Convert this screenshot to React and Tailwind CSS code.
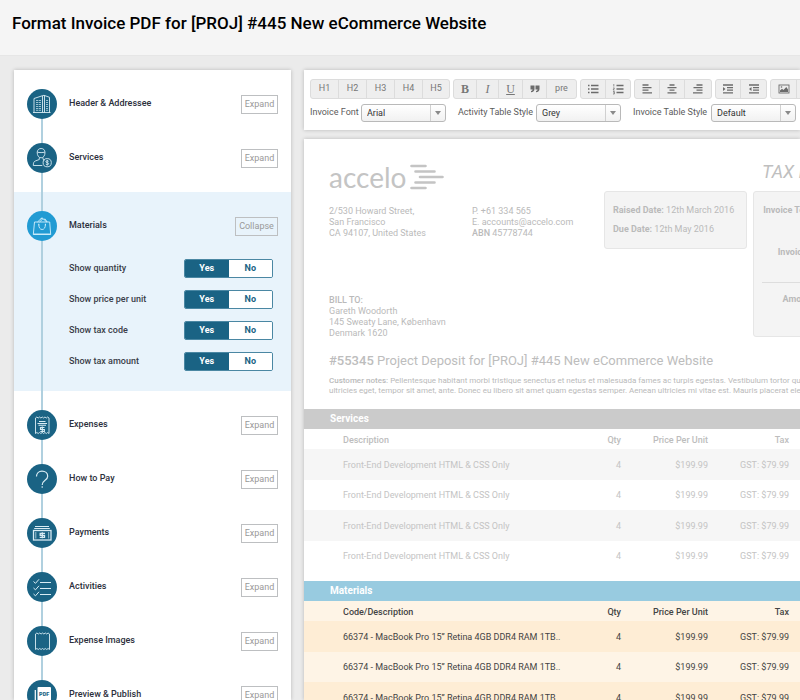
import React, { useState } from "react";

const iconProps = {
  viewBox: "0 0 30 30",
  className: "h-[30px] w-[30px]",
  fill: "none",
  stroke: "#d9ecf4",
  strokeWidth: 0.9,
  "aria-hidden": true,
};

const BuildingIcon = () => (
  <svg {...iconProps}>
    <path d="M6 23.5h17.5M7 23.5V9.5l8.5-2.8v16.8M15.5 6.7l1.5-.4 5.5 2v15.2M17.5 6.5v17" />
    <path d="M9 11.5h5M9 13.5h5M9 15.5h5M9 17.5h5M9 19.5h5M9 21.3h5" strokeDasharray="2.2 .6" strokeWidth="0.7" />
    <path d="M19 11.5h2M19 13.5h2M19 15.5h2M19 17.5h2M19 19.5h2M19 21.3h2" strokeWidth="0.7" />
  </svg>
);

const PersonIcon = () => (
  <svg {...iconProps}>
    <path d="M10.200 9.500c0-2.500 1.600-4 3.900-4s3.900 1.500 3.900 4c0 3-1.500 5.300-3.900 5.300s-3.900-2.300-3.900-5.300zM10.400 9.300c2 .5 5.300.3 7.400 0M12.300 14.500v2l-4 1.500c-1.500.6-2 2-2 4.500h9M16 14.500v1.800l1.500 1" />
    <circle cx="20.200" cy="19.700" r="4.100" />
    <path d="M21.600 18.400c-.3-.5-.8-.7-1.400-.7-.8 0-1.300.4-1.300 1 0 1.400 2.800.6 2.800 2 0 .7-.6 1-1.500 1-.7 0-1.200-.2-1.500-.8M20.200 16.900v5.600" />
  </svg>
);

const BagIcon = () => (
  <svg {...iconProps} stroke="#d3effc">
    <path d="M7.500 11h15.200l1 12.500H6.300zM6.400 23h17.200" />
    <path d="M10.500 11l4-3.800 1.800 1.300M12.500 11l3-2.800M13.500 8l2-.8 4.300 3.800M17 8.300l1.200-.2 2 2.900" />
    <path d="M11.800 13.500c0 3 1.200 5 3.300 5s3.300-2 3.300-5" />
    <path d="M11.300 13.500h1M17.900 13.500h1" strokeWidth="1.400" />
  </svg>
);

const ReceiptIcon = () => (
  <svg {...iconProps}>
    <path d="M8.500 8v15.500M22 8v15.500" />
    <path d="M8.500 8l1.350-1 1.350 1 1.350-1 1.350 1 1.350-1 1.350 1 1.350-1 1.350 1 1.350-1 1.350 1M8.500 23.500l1.350-1 1.350 1 1.350-1 1.350 1 1.350-1 1.350 1 1.350-1 1.350 1 1.350-1 1.350 1" />
    <path d="M12 11.500h6.500M10.500 13.500h9.500M11.500 15.200h7.500" strokeWidth="1.100" />
    <path d="M17.500 17.500h-4v2h3.800v2h-4M15.300 16.500v6" strokeWidth="1.200" />
  </svg>
);

const QuestionIcon = () => (
  <svg {...iconProps} strokeWidth="1.200">
    <path d="M9.500 12.500c0-3.200 2.300-5.300 5.500-5.300s5.700 2 5.700 5c0 4.500-5.500 3.800-5.500 8.800M15.200 22.300v1.500" />
  </svg>
);

const CashIcon = () => (
  <svg {...iconProps}>
    <path d="M8 8.500h14M7.200 10.500h15.600" strokeWidth="1.200" />
    <rect x="6.500" y="12.500" width="17.500" height="9.500" strokeWidth="1.300" />
    <path d="M8.800 14v6.500M21.700 14v6.500" strokeWidth="0.700" />
    <path d="M18 15.400h-4.800v1.900h4.300v2h-4.800M15.300 14.300v6" strokeWidth="1.300" />
  </svg>
);

const ChecklistIcon = () => (
  <svg {...iconProps} strokeWidth="1">
    <path d="M6.500 9.500l2 1.800 3.500-4M6.500 16l2 1.800 3.500-4M6.500 22l2 1.800 3.500-4M13 10.500h11M13 16.500h11M13 22.500h11" />
  </svg>
);

const ImageReceiptIcon = () => (
  <svg {...iconProps}>
    <path d="M8.500 8v15.500M22.500 8v15.500" />
    <path d="M8.500 8l1.400-1 1.400 1 1.400-1 1.400 1 1.400-1 1.400 1 1.400-1 1.400 1 1.400-1 1.400 1M8.500 23.500l1.400-1 1.400 1 1.400-1 1.400 1 1.400-1 1.400 1 1.400-1 1.400 1 1.400-1 1.400 1" />
  </svg>
);

const PdfIcon = () => (
  <svg {...iconProps} stroke="none">
    <rect x="10.500" y="7" width="13.500" height="13.500" rx="1" fill="#fff" />
    <path d="M8.300 10v12.500H21" stroke="#fff" strokeWidth="1.200" />
    <text x="17.200" y="15.500" textAnchor="middle" fontSize="5.500" fontWeight="900" fill="#1a6384" fontFamily="Roboto, sans-serif">PDF</text>
  </svg>
);

const OPTIONS = ["Show quantity", "Show price per unit", "Show tax code", "Show tax amount"];

function Rail({ icon: Icon, active, first, tall }) {
  return (
    <div className="flex w-[30px] shrink-0 flex-col items-center">
      <span className={`w-0.5 ${tall ? "h-[19px]" : "h-3"} ${first ? "bg-transparent" : "bg-[#b0d0df]"}`} />
      <span className={`h-[30px] w-[30px] rounded-full ${active ? "bg-[#219bd3]" : "bg-[#1a6384]"}`}>
        <Icon />
      </span>
      <span className="w-0.5 flex-1 bg-[#b0d0df]" />
    </div>
  );
}

function ItemHead({ label, open }) {
  return (
    <div className="flex h-[54px] items-center justify-between">
      <h2 className="text-[9px] font-medium text-[#2c2f3c]">{label}</h2>
      <button
        type="button"
        aria-expanded={!!open}
        className={`h-[19px] border border-[#bdbfc1] text-center text-[9px] leading-3 text-[#999999] ${open ? "w-[43px]" : "w-[37px]"}`}
      >
        {open ? "Collapse" : "Expand"}
      </button>
    </div>
  );
}

function Item({ label, icon, first, tall, extra }) {
  return (
    <li className="flex gap-3 pl-[13px] pr-[13px]">
      <Rail icon={icon} first={first} tall={tall} />
      <div className={`flex-1 ${tall ? "pt-[7px]" : ""} ${extra ? "pb-[7px]" : ""}`}>
        <ItemHead label={label} />
      </div>
    </li>
  );
}

function YesNo({ label }) {
  const [yes, setYes] = useState(true);
  return (
    <div className="flex h-[31px] items-center justify-between pr-[5px]">
      <span className="text-[9px] font-medium text-[#3a3d48]">{label}</span>
      <div role="group" aria-label={label} className="flex h-[19px] w-[89px] overflow-hidden rounded-xs border border-[#4a87a3] text-[9px] font-bold">
        <button
          type="button"
          aria-pressed={yes}
          onClick={() => setYes(true)}
          className={`flex-1 ${yes ? "bg-[#1a6384] text-white" : "bg-white text-[#1a6384]"}`}
        >
          Yes
        </button>
        <button
          type="button"
          aria-pressed={!yes}
          onClick={() => setYes(false)}
          className={`flex-1 ${yes ? "bg-white text-[#1a6384]" : "bg-[#1a6384] text-white"}`}
        >
          No
        </button>
      </div>
    </div>
  );
}

function Sidebar() {
  return (
    <aside className="w-[277px] shrink-0 bg-white pt-[7px] shadow-[0_0_4px_rgba(0,0,0,0.22)]">
      <ul>
        <Item label="Header & Addressee" icon={BuildingIcon} first />
        <Item label="Services" icon={PersonIcon} extra />
        <li className="flex gap-3 bg-[#e8f3fb] pl-[13px] pr-[13px]">
          <Rail icon={BagIcon} active tall />
          <div className="flex-1 pb-[14px] pt-[7px]">
            <ItemHead label="Materials" open />
            {OPTIONS.map((o) => (
              <YesNo key={o} label={o} />
            ))}
          </div>
        </li>
        <Item label="Expenses" icon={ReceiptIcon} tall />
        <Item label="How to Pay" icon={QuestionIcon} />
        <Item label="Payments" icon={CashIcon} />
        <Item label="Activities" icon={ChecklistIcon} />
        <Item label="Expense Images" icon={ImageReceiptIcon} />
        <Item label="Preview & Publish" icon={PdfIcon} />
      </ul>
    </aside>
  );
}

const Glyph = ({ children }) => (
  <svg viewBox="0 0 12 12" className="h-3 w-3" fill="none" stroke="#6b6b6b" strokeWidth="1.300" aria-hidden="true">
    {children}
  </svg>
);

function Tools({ items }) {
  return (
    <div className="flex h-5 shrink-0 divide-x divide-[#dcdcdc] overflow-hidden rounded-[3px] border border-[#dcdcdc] bg-[#eeeeee]">
      {items.map(([name, width, content]) => (
        <button key={name} type="button" aria-label={name} className={`flex items-center justify-center text-[9px] text-[#777777] ${width}`}>
          {content}
        </button>
      ))}
    </div>
  );
}

const BulletGlyph = (
  <Glyph>
    <path d="M1 2.500h1.500M1 6h1.500M1 9.500h1.500M4 2.500h7.500M4 6h7.500M4 9.500h7.500" />
  </Glyph>
);
const NumberGlyph = (
  <Glyph>
    <path d="M4.500 2.500h7M4.500 6h7M4.500 9.500h7" />
    <path d="M1.800 1v2.500M1 5h1.500L1 7h1.600M1 8.500h1.400v2.500H1M1.300 9.800h1" strokeWidth="0.700" />
  </Glyph>
);
const LeftGlyph = (
  <Glyph>
    <path d="M1.500 2h6M1.500 4.600h9M1.500 7.200h6M1.500 9.800h9.500" />
  </Glyph>
);
const CenterGlyph = (
  <Glyph>
    <path d="M3.500 2h5M1.500 4.600h9M3.500 7.200h5M1.500 9.800h9" />
  </Glyph>
);
const RightGlyph = (
  <Glyph>
    <path d="M4.500 2h6M1.500 4.600h9M4.500 7.200h6M1 9.800h9.500" />
  </Glyph>
);
const IndentGlyph = (
  <Glyph>
    <path d="M1 2h10M5 4.600h6M5 7.200h6M1 9.800h10" />
    <path d="M1 4l2.500 2L1 8z" fill="#6b6b6b" stroke="none" />
  </Glyph>
);
const OutdentGlyph = (
  <Glyph>
    <path d="M1 2h10M5 4.600h6M5 7.200h6M1 9.800h10" />
    <path d="M3.500 4L1 6l2.500 2z" fill="#6b6b6b" stroke="none" />
  </Glyph>
);
const ImageGlyph = (
  <Glyph>
    <rect x="1" y="2" width="10" height="8" strokeWidth="0.900" />
    <path d="M2 9V7.500l2-1.800 1.500 1.200L8.300 4 10 6.500V9z" fill="#6b6b6b" stroke="none" />
    <circle cx="3.500" cy="4" r="0.800" fill="#6b6b6b" stroke="none" />
  </Glyph>
);
const QuoteGlyph = (
  <svg viewBox="0 0 12 12" className="h-3 w-3" fill="#6b6b6b" aria-hidden="true">
    <path d="M1.500 2.500h4v3.500c0 2-1.200 3-3.500 3.200V8c1-.2 1.500-.6 1.600-1.500H1.500zM6.500 2.500h4v3.500c0 2-1.200 3-3.500 3.200V8c1-.2 1.500-.6 1.600-1.500H6.500z" />
  </svg>
);

const serif = "font-['Liberation_Serif',serif] text-[12px]";

function StyleSelect({ id, label, value, labelWidth }) {
  return (
    <div className="flex shrink-0 items-center">
      <label htmlFor={id} className={`whitespace-nowrap text-[9px] text-[#5c5c5c] ${labelWidth}`}>
        {label}
      </label>
      <div className="relative">
        <select
          id={id}
          defaultValue={value}
          className="block h-[18px] w-[85px] appearance-none rounded-[3px] border border-[#b9b9b9] bg-linear-to-b from-white to-[#f1f1f1] pl-[5px] text-[9px] leading-3 text-[#333333]"
        >
          <option>{value}</option>
        </select>
        <span className="pointer-events-none absolute inset-y-px right-px flex w-[15px] items-center justify-center border-l border-[#d0d0d0]">
          <svg viewBox="0 0 6 4" className="h-1 w-1.5" fill="#8a8a8a" aria-hidden="true">
            <path d="M0 0h6L3 4z" />
          </svg>
        </span>
      </div>
    </div>
  );
}

function Toolbar() {
  return (
    <section aria-label="Formatting" className="flex flex-col gap-[5px] overflow-hidden bg-white px-1.5 pb-2 pt-[9px]">
      <div className="flex gap-[3px]">
        <Tools
          items={[
            ["H1", "w-7", "H1"],
            ["H2", "w-7", "H2"],
            ["H3", "w-7", "H3"],
            ["H4", "w-7", "H4"],
            ["H5", "w-[26px]", "H5"],
          ]}
        />
        <Tools
          items={[
            ["Bold", "w-[23px]", <b className={serif}>B</b>],
            ["Italic", "w-[22px]", <i className={serif}>I</i>],
            ["Underline", "w-6", <u className={serif}>U</u>],
            ["Quote", "w-6", QuoteGlyph],
            ["Preformatted", "w-[29px]", "pre"],
          ]}
        />
        <Tools items={[["Bulleted list", "w-[25px]", BulletGlyph], ["Numbered list", "w-6", NumberGlyph]]} />
        <Tools
          items={[
            ["Align left", "w-[25px]", LeftGlyph],
            ["Align center", "w-[25px]", CenterGlyph],
            ["Align right", "w-[26px]", RightGlyph],
          ]}
        />
        <Tools items={[["Indent", "w-[25px]", IndentGlyph], ["Outdent", "w-[25px]", OutdentGlyph]]} />
        <Tools items={[["Image", "w-[26px]", ImageGlyph], ["Link", "w-[26px]", ""]]} />
      </div>
      <div className="flex gap-3">
        <StyleSelect id="font" label="Invoice Font" value="Arial" labelWidth="w-[51px]" />
        <StyleSelect id="activity" label="Activity Table Style" value="Grey" labelWidth="w-[78px]" />
        <StyleSelect id="invoice" label="Invoice Table Style" value="Default" labelWidth="w-[78px]" />
      </div>
    </section>
  );
}

function ItemsTable({ title, first, text, count, highlight }) {
  const head = highlight ? "text-[#444444]" : "text-[#bdbdbd]";
  const body = highlight ? "text-[#444444]" : "text-[#c4c4c4]";
  const stripe = highlight ? "odd:bg-[#feedd5]" : "odd:bg-[#f6f6f6]";
  return (
    <section className={highlight ? "bg-[#fef4e6]" : "pb-2.5"}>
      <h3 className={`h-5 pl-[26px] text-[10px] font-bold leading-5 text-white ${highlight ? "bg-[#98cbe0]" : "bg-[#cbcbcb]"}`}>{title}</h3>
      <table className="w-full table-fixed text-[9px] leading-3">
        <thead>
          <tr className={`h-5 text-right ${head}`}>
            <th scope="col" className="pl-[39px] pt-0.5 text-left font-medium">{first}</th>
            <th scope="col" className="w-10 pt-0.5 font-medium">Qty</th>
            <th scope="col" className="w-[87px] pt-0.5 font-medium">Price Per Unit</th>
            <th scope="col" className="w-[81px] pt-0.5 font-medium">Tax</th>
            <th scope="col" className="w-[135px] pr-6 pt-0.5 font-medium">Total</th>
          </tr>
        </thead>
        <tbody>
          {Array.from({ length: count }, (_, i) => (
            <tr key={i} className={`text-right odd:h-[31px] even:h-[30px] ${body} ${stripe}`}>
              <td className="whitespace-nowrap pl-[39px] text-left">{text}</td>
              <td>4</td>
              <td>$199.99</td>
              <td>GST: $79.99</td>
              <td className="pr-6">$799.96</td>
            </tr>
          ))}
        </tbody>
      </table>
    </section>
  );
}

function Logo() {
  return (
    <div className="flex h-8 items-center gap-1 text-[#c4c4c4]">
      <span className="font-['Lato',sans-serif] text-[28px] leading-8">accelo</span>
      <svg viewBox="0 0 34 26" className="h-[26px] w-[34px]" fill="none" stroke="currentColor" strokeWidth="2.600" strokeLinecap="round" aria-hidden="true">
        <path d="M1.500 2h14M5.500 7.500h19M10 13h22.500M5.500 18.500h19M1.500 24h14" />
      </svg>
    </div>
  );
}

function Invoice() {
  return (
    <article className="min-h-0 flex-1 overflow-hidden bg-white shadow-[0_0_4px_rgba(0,0,0,0.22)]">
      <div className="min-w-[620px] text-[9px] leading-[11px] text-[#bababa]">
        <div className="grid grid-cols-[143px_132px_143px_1fr] pl-[25px] pt-[22px]">
          <div className="col-span-3">
            <Logo />
          </div>
          <p className="pl-[15px] text-[18px] italic leading-[22px] text-[#bfbfbf]">TAX INVOICE</p>
          <div className="pt-[13px]">
            <address className="not-italic">
              2/530 Howard Street,<br />San Francisco<br />CA 94107, United States
            </address>
            <p className="pt-14">
              <b className="font-medium">BILL TO:</b><br />Gareth Woodorth<br />145 Sweaty Lane, København<br />Denmark 1620
            </p>
          </div>
          <p className="pt-[13px]">
            P. +61 334 565<br />E. accounts@accelo.com<br /><b className="font-medium">ABN</b> 45778744
          </p>
          <div>
            <div className="-mt-0.5 flex h-[58px] flex-col justify-center gap-2 rounded-[3px] border border-[#e6e6e6] bg-[#f4f4f4] pl-2">
              <p><b>Raised Date:</b> 12th March 2016</p>
              <p><b>Due Date:</b> 12th May 2016</p>
            </div>
          </div>
          <div className="pl-1.5">
            <dl className="-mt-0.5 h-[146px] rounded-[3px] border border-[#e6e6e6] bg-[#f4f4f4] px-2 pt-[13px] font-bold">
              <dt className="w-[55px] whitespace-nowrap text-right">Invoice Total:</dt>
              <dt className="w-[55px] whitespace-nowrap pt-[31px] text-right">Invoice #:</dt>
              <dt className="mt-6 border-t border-[#dddddd] pt-[11px]"><span className="block w-[55px] text-right">Amount:</span></dt>
            </dl>
          </div>
        </div>
        <div className="pb-[13px] pl-[25px] pt-[13px]">
          <h2 className="text-[13px] leading-[18px] text-[#bdbdbd]">
            <b className="font-medium">#55345</b> Project Deposit for [PROJ] #445 New eCommerce Website
          </h2>
          <p className="whitespace-nowrap pt-1.5 text-[8px] leading-[10px]">
            <b className="font-medium">Customer notes:</b> Pellentesque habitant morbi tristique senectus et netus et malesuada fames ac turpis egestas. Vestibulum tortor quam, feugiat vitae,
            <br />
            ultricies eget, tempor sit amet, ante. Donec eu libero sit amet quam egestas semper. Aenean ultricies mi vitae est. Mauris placerat eleifend leo.
          </p>
        </div>
        <ItemsTable title="Services" first="Description" text="Front-End Development HTML & CSS Only" count={4} />
        <ItemsTable title="Materials" first="Code/Description" text="66374 - MacBook Pro 15” Retina 4GB DDR4 RAM 1TB.." count={4} highlight />
      </div>
    </article>
  );
}

export default function App() {
  return (
    <div className="flex h-screen flex-col overflow-hidden bg-[#ebebeb] font-['Roboto',sans-serif]">
      <header className="h-14 shrink-0 border-b border-[#e6e6e6] bg-[#f5f5f5] px-3 pt-[11px]">
        <h1 className="text-[17px] font-medium leading-6 text-black">Format Invoice PDF for [PROJ] #445 New eCommerce Website</h1>
      </header>
      <main className="flex min-h-0 flex-1 gap-[13px] pl-[14px] pt-[14px]">
        <Sidebar />
        <div className="flex min-w-0 flex-1 flex-col gap-[9px]">
          <div className="shadow-[0_0_4px_rgba(0,0,0,0.22)]">
            <Toolbar />
          </div>
          <Invoice />
        </div>
      </main>
    </div>
  );
}
